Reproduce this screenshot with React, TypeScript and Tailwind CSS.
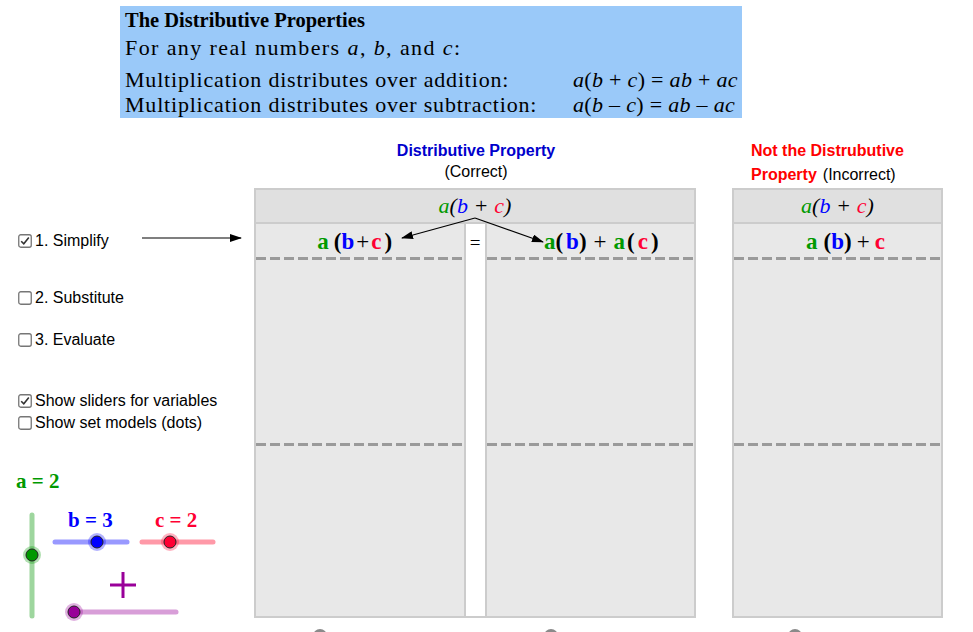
import React from "react";

const G = "text-[#009900]";
const B = "text-[#0000ff]";
const R = "text-[#ff0033]";

function Check({ checked }: { checked: boolean }) {
  return (
    <svg width="14" height="14" viewBox="0 0 14 14" className="shrink-0">
      <rect x="0.75" y="0.75" width="12.5" height="12.5" rx="2" fill="white" stroke="#767676" strokeWidth="1.3" />
      {checked && <path d="M3.2 7.2 L5.8 9.8 L10.8 3.6" fill="none" stroke="#333" strokeWidth="1.6" />}
    </svg>
  );
}

function Opt({ checked, label, className }: { checked: boolean; label: string; className: string }) {
  return (
    <div className={"absolute left-[18px] flex items-center gap-[3px] text-[16px] text-black leading-none " + className}>
      <Check checked={checked} />
      <span>{label}</span>
    </div>
  );
}

function Dashed() {
  return <div className="h-[3px] w-full bg-[repeating-linear-gradient(90deg,#9a9a9a_0px,#9a9a9a_10px,transparent_10px,transparent_14px)]" />;
}

function Column({ children }: { children?: React.ReactNode }) {
  return (
    <div className="flex-1 bg-[#e8e8e8] flex flex-col">
      <div className="h-[33px] pt-[3px] flex items-center justify-center font-bold text-[23px] font-['Liberation_Serif',serif]">{children}</div>
      <Dashed />
      <div className="h-[183px]" />
      <Dashed />
      <div className="flex-1" />
    </div>
  );
}

function Header() {
  return (
    <div className="h-[34px] pb-[2px] bg-[#e0e0e0] border-b-2 border-[#cccccc] flex items-center justify-center italic text-[22px] font-['Liberation_Serif',serif]">
      <span className={G}>a</span>(<span className={B}>b</span>
      <span className="mx-[7px] not-italic">+</span>
      <span className={R}>c</span>)
    </div>
  );
}

export default function App() {
  return (
    <div className="relative w-[973px] h-[632px] bg-white overflow-hidden font-['Liberation_Sans',Arial,sans-serif]">
      {/* banner */}
      <div className="absolute left-[120px] top-[6px] w-[622px] h-[112px] bg-[#9ac9f9] pl-[5px] pt-[1px] text-black font-['Liberation_Serif',serif] text-[22px] leading-[25px] tracking-[0.8px]">
        <div className="font-bold text-[20.5px] tracking-normal pt-[1px]">The Distributive Properties</div>
        <div className="mt-[2px] tracking-[1.4px]">
          For any real numbers <i>a</i>, <i>b</i>, and <i>c</i>:
        </div>
        <div className="mt-[7px] flex">
          <span className="w-[448px]">Multiplication distributes over addition:</span>
          <span className="tracking-[0.3px]"><i>a</i>(<i>b</i> + <i>c</i>) = <i>ab</i> + <i>ac</i></span>
        </div>
        <div className="flex">
          <span className="w-[448px]">Multiplication distributes over subtraction:</span>
          <span className="tracking-[0.3px]"><i>a</i>(<i>b</i> – <i>c</i>) = <i>ab</i> – <i>ac</i></span>
        </div>
      </div>

      {/* titles */}
      <div className="absolute left-[386px] top-[143px] w-[180px] text-center text-[16px] leading-none">
        <div className="font-bold text-[#0000cc]">Distributive Property</div>
        <div className="mt-[5px] text-black">(Correct)</div>
      </div>
      <div className="absolute left-[751px] top-[143px] text-[16px] leading-none">
        <div className="font-bold text-[#ff0000]">Not the Distrubutive</div>
        <div className="mt-[8px]">
          <span className="font-bold text-[#ff0000]">Property</span>
          <span className="ml-[6px] text-black">(Incorrect)</span>
        </div>
      </div>

      {/* box 1 */}
      <div className="absolute left-[254px] top-[188px] w-[442px] h-[430px] border-2 border-[#cccccc] flex flex-col">
        <Header />
        <div className="flex-1 flex">
          <Column>
            <span className={G}>a</span>
            <span className="ml-[5px]">(</span>
            <span className={B}>b</span>
            <span className="mx-[2px] font-normal">+</span>
            <span className={R}>c</span>
            <span className="ml-[3px] mr-[10px]">)</span>
          </Column>
          <div className="w-[23px] bg-white border-x-2 border-[#cccccc] flex justify-center pt-[5px] text-[19px] font-['Liberation_Serif',serif]">=</div>
          <Column>
            <span className={"ml-[22px] " + G}>a</span>
            <span>(</span>
            <span className={"ml-[3px] " + B}>b</span>
            <span>)</span>
            <span className="mx-[7px] font-normal">+</span>
            <span className={"mr-[2px] " + G}>a</span>
            <span>(</span>
            <span className={"mx-[3px] " + R}>c</span>
            <span>)</span>
          </Column>
        </div>
      </div>

      {/* box 3 */}
      <div className="absolute left-[732px] top-[188px] w-[211px] h-[430px] border-2 border-[#cccccc] flex flex-col">
        <Header />
        <div className="flex-1 flex">
          <Column>
            <span className={"ml-[16px] " + G}>a</span>
            <span className="ml-[6px]">(</span>
            <span className={B}>b</span>
            <span>)</span>
            <span className="mx-[5px] font-normal">+</span>
            <span className={R}>c</span>
          </Column>
        </div>
      </div>

      {/* options */}
      <Opt checked label="1. Simplify" className="top-[233px]" />
      <Opt checked={false} label="2. Substitute" className="top-[290px]" />
      <Opt checked={false} label="3. Evaluate" className="top-[332px]" />
      <Opt checked label="Show sliders for variables" className="top-[393px]" />
      <Opt checked={false} label="Show set models (dots)" className="top-[415px]" />

      {/* slider labels */}
      <div className={"absolute left-[16px] top-[466px] font-bold text-[21px] font-['Liberation_Serif',serif] " + G}>a = 2</div>
      <div className={"absolute left-[68px] top-[505px] font-bold text-[21px] font-['Liberation_Serif',serif] " + B}>b = 3</div>
      <div className={"absolute left-[155px] top-[505px] font-bold text-[21px] font-['Liberation_Serif',serif] " + R}>c = 2</div>

      {/* drawings */}
      <svg className="absolute left-0 top-0 pointer-events-none" width="973" height="632">
        <defs>
          <marker id="ah" markerWidth="12" markerHeight="8" refX="11" refY="4" orient="auto" markerUnits="userSpaceOnUse">
            <path d="M0 0 L12 4 L0 8 Z" fill="black" />
          </marker>
        </defs>
        <line x1="142" y1="238" x2="241" y2="238" stroke="black" strokeWidth="1.2" markerEnd="url(#ah)" />
        <line x1="475" y1="218" x2="402" y2="238" stroke="black" strokeWidth="1.2" markerEnd="url(#ah)" />
        <line x1="475" y1="218" x2="543" y2="242" stroke="black" strokeWidth="1.2" markerEnd="url(#ah)" />

        {/* a slider */}
        <line x1="32" y1="515" x2="32" y2="616" stroke="#9ed69e" strokeWidth="5" strokeLinecap="round" />
        <circle cx="32" cy="555" r="9" fill="#009900" fillOpacity="0.3" />
        <circle cx="32" cy="555" r="6" fill="#009900" stroke="#222" strokeWidth="1" />
        {/* b slider */}
        <line x1="55" y1="542" x2="127" y2="542" stroke="#9999ff" strokeWidth="5" strokeLinecap="round" />
        <circle cx="97" cy="542" r="9" fill="#0000ff" fillOpacity="0.3" />
        <circle cx="97" cy="542" r="6" fill="#0000ff" stroke="#222" strokeWidth="1" />
        {/* c slider */}
        <line x1="142" y1="542" x2="213" y2="542" stroke="#ff99a8" strokeWidth="5" strokeLinecap="round" />
        <circle cx="170" cy="542" r="9" fill="#ff0033" fillOpacity="0.3" />
        <circle cx="170" cy="542" r="6" fill="#ff0033" stroke="#222" strokeWidth="1" />
        {/* plus */}
        <line x1="110" y1="585" x2="136" y2="585" stroke="#990099" strokeWidth="3" />
        <line x1="123" y1="572" x2="123" y2="598" stroke="#990099" strokeWidth="3" />
        {/* purple slider */}
        <line x1="76" y1="612" x2="176" y2="612" stroke="#d89ed8" strokeWidth="5" strokeLinecap="round" />
        <circle cx="74" cy="612" r="9" fill="#990099" fillOpacity="0.3" />
        <circle cx="74" cy="612" r="6" fill="#990099" stroke="#222" strokeWidth="1" />

        {/* bottom partial circles */}
        <circle cx="320" cy="636" r="7" fill="#8a8a8a" />
        <circle cx="551" cy="636" r="7" fill="#8a8a8a" />
        <circle cx="795" cy="636" r="7" fill="#8a8a8a" />
      </svg>
    </div>
  );
}
